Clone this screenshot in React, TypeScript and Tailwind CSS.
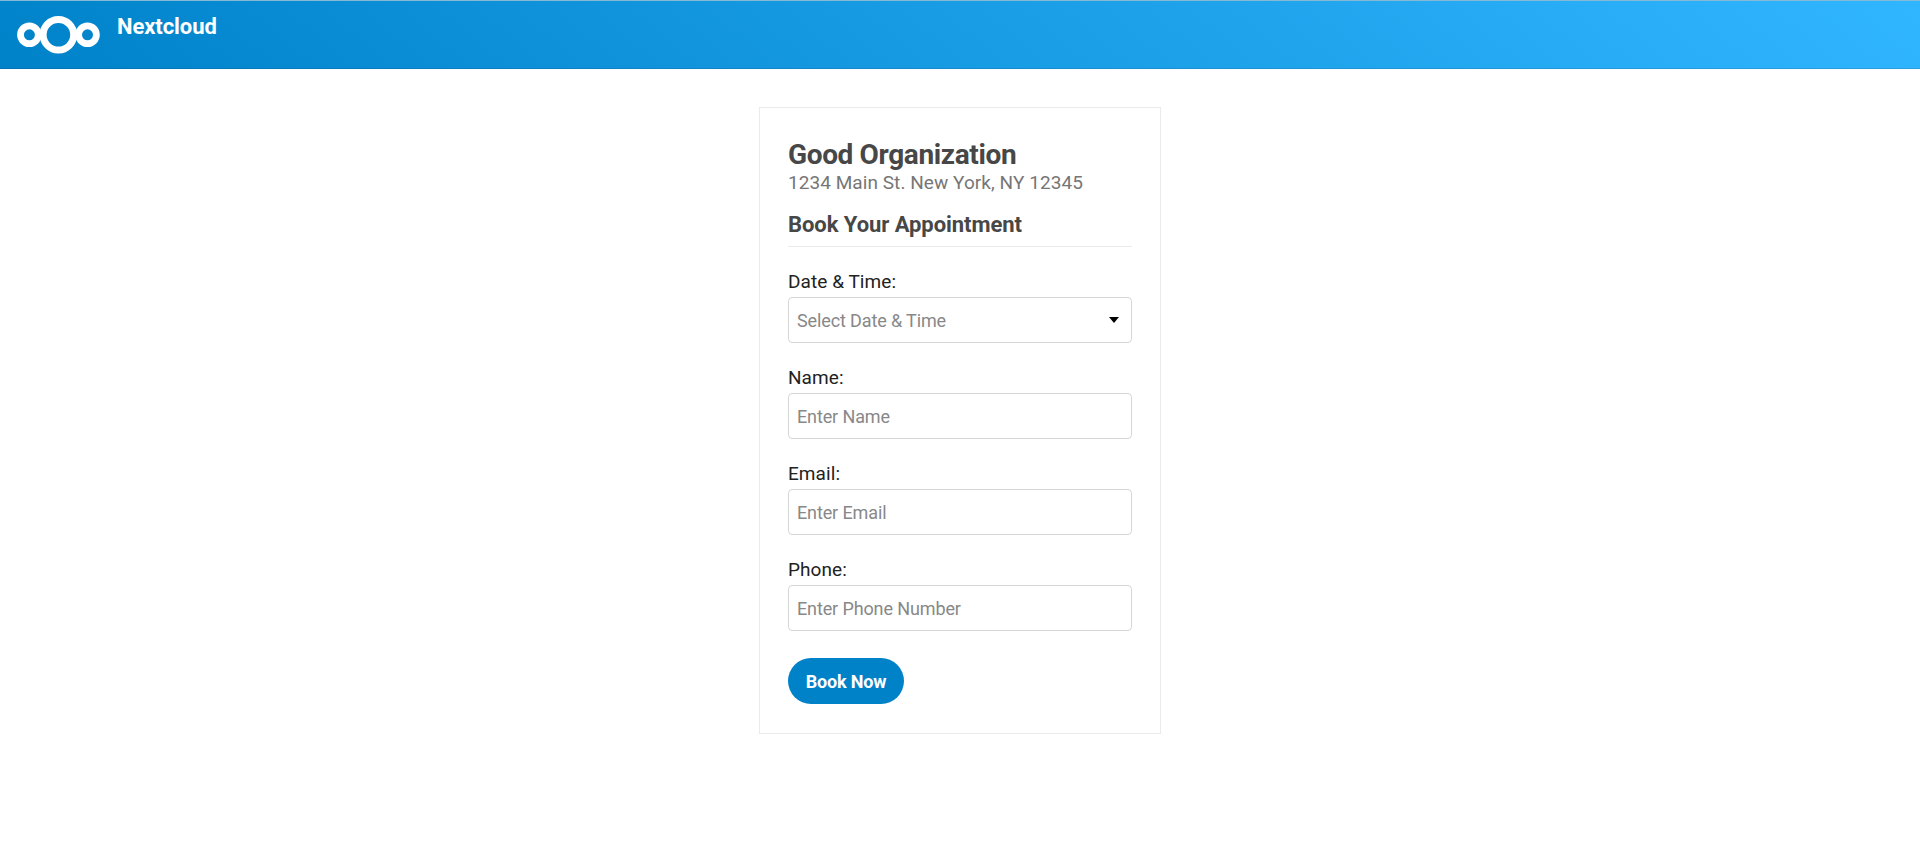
import React from 'react';

type FieldProps = { id: string; label: string; placeholder: string; type?: string };

const boxClass =
  'h-[46px] w-full rounded-[4px] border border-[#d6d6d6] bg-white px-2 text-[18px] tracking-[-0.12px] text-[#222] placeholder:text-[#888] placeholder:opacity-100';

function Logo() {
  return (
    <svg width="84" height="40" viewBox="0 0 84 40" fill="none" stroke="#fff" className="shrink-0" aria-hidden="true">
      <circle cx="13.4" cy="19.8" r="8.9" strokeWidth="6.8" />
      <circle cx="42.4" cy="19.8" r="15.3" strokeWidth="7" />
      <circle cx="71.5" cy="19.8" r="8.9" strokeWidth="6.8" />
    </svg>
  );
}

function Label({ htmlFor, children }: { htmlFor: string; children: React.ReactNode }) {
  return (
    <label htmlFor={htmlFor} className="block h-[30px] text-[19px] leading-[30px] tracking-[0.07px] text-[#222]">
      {children}
    </label>
  );
}

function Field({ id, label, placeholder, type = 'text' }: FieldProps) {
  return (
    <div className="mb-5">
      <Label htmlFor={id}>{label}</Label>
      <input id={id} type={type} placeholder={placeholder} className={boxClass} />
    </div>
  );
}

export default function App() {
  return (
    <div className="min-h-screen bg-white font-['Roboto',sans-serif]">
      <header className="flex h-[69px] items-start border-y border-t-[#86b9d6] border-b-black/10 bg-[linear-gradient(40deg,#0082c9_0%,#30b6ff_100%)] bg-origin-border pl-4 pt-[14px]">
        <Logo />
        <span className="ml-[17px] -mt-[3px] text-[22px] font-bold leading-[30px] tracking-[-0.08px] text-white">Nextcloud</span>
      </header>
      <main className="mx-auto mt-[38px] h-[627px] w-[402px] border border-[#ebebeb] px-7 pt-[29px]">
        <h1 className="text-[28px] font-bold leading-[36px] tracking-[-0.36px] text-[#474747]">Good Organization</h1>
        <p className="text-[19px] leading-[20px] tracking-[0.06px] text-[#767676]">1234 Main St. New York, NY 12345</p>
        <h2 className="mt-[13px] h-[41px] border-b border-[#ebebeb] text-[22px] font-bold leading-[37px] tracking-[-0.06px] text-[#474747]">
          Book Your Appointment
        </h2>
        <form className="pt-5" onSubmit={(e) => e.preventDefault()}>
          <div className="mb-5">
            <Label htmlFor="date">Date &amp; Time:</Label>
            <button id="date" type="button" className={`${boxClass} flex items-center justify-between`}>
              <span className="text-[#888]">Select Date &amp; Time</span>
              <svg width="10" height="6" viewBox="0 0 10 6" className="mr-1" aria-hidden="true">
                <path d="M0 0h10L5 6z" fill="#000" />
              </svg>
            </button>
          </div>
          <Field id="name" label="Name:" placeholder="Enter Name" />
          <Field id="email" label="Email:" placeholder="Enter Email" type="email" />
          <Field id="phone" label="Phone:" placeholder="Enter Phone Number" type="tel" />
          <button type="submit" className="mt-[7px] h-[46px] w-[116px] rounded-full bg-[#0082c9] text-[18px] font-bold tracking-[-0.17px] text-white">
            Book Now
          </button>
        </form>
      </main>
    </div>
  );
}
